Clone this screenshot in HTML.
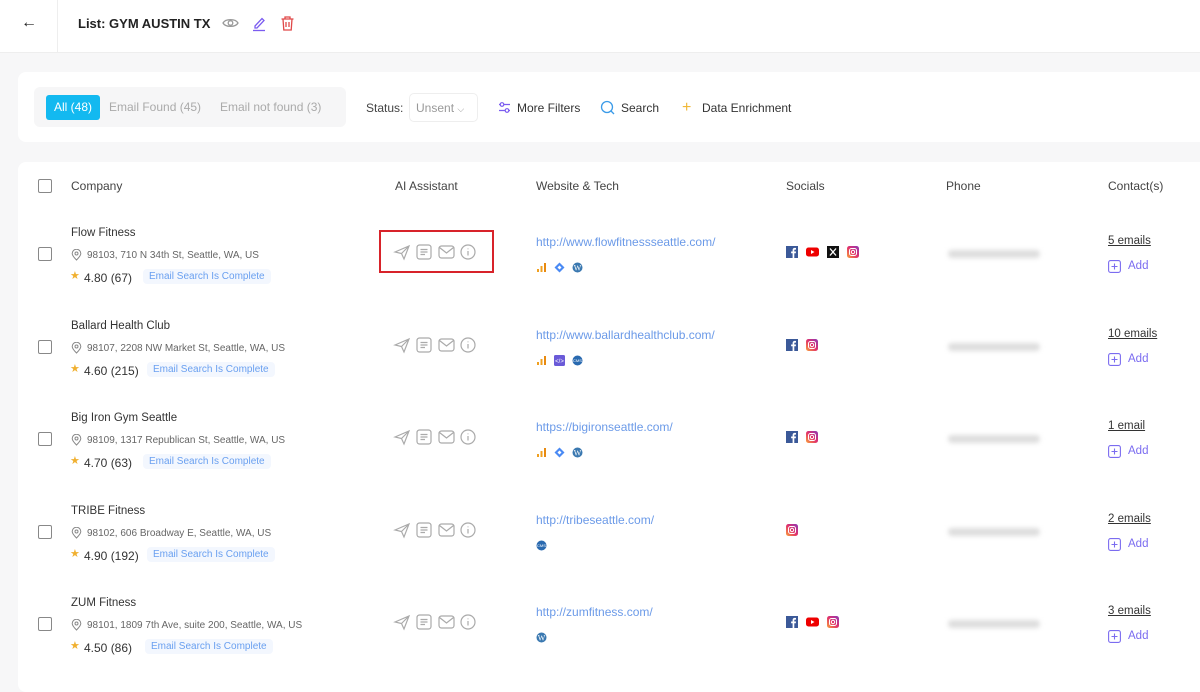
<!DOCTYPE html>
<html><head><meta charset="utf-8"><style>
*{margin:0;padding:0;box-sizing:border-box}
body{width:1200px;height:684px;overflow:hidden;background:#f7f7f8;font-family:"Liberation Sans",sans-serif;color:#333;position:relative;font-size:12px}
.a{position:absolute;white-space:nowrap}
.top{position:absolute;left:0;top:0;width:1200px;height:53px;background:#fff;border-bottom:1px solid #eee}
.card{position:absolute;background:#fff;border-radius:8px}
.cb{position:absolute;width:14px;height:14px;border:1.3px solid #888;border-radius:2px;background:#fff}
.hd{color:#444;font-size:12px}
.nm{font-size:11.5px;color:#333}
.ad{font-size:10px;color:#666}
.rt{font-size:12px;color:#333}
.bd{font-size:10px;color:#6aa0f0;background:#f3f7fe;padding:2px 6px;border-radius:4px}
.url{font-size:12px;color:#6b9ae8}
.em{font-size:11.5px;color:#333;text-decoration:underline}
.add{font-size:11.5px;color:#7b6cf0}
.blur{position:absolute;height:8px;background:#ddd;border-radius:4px;filter:blur(2.5px)}
</style></head><body>
<div class="top"></div>
<div class="a" style="left:0;top:0;width:58px;height:53px;border-right:1px solid #eee"></div>
<div class="a" style="left:21px;top:14px;font-size:16px;color:#222">←</div>
<div class="a" style="left:78px;top:16px;font-size:13px;font-weight:bold;color:#222">List: GYM AUSTIN TX</div>
<svg class="a" style="left:222px;top:16px" width="17" height="14" viewBox="0 0 17 14"><path d="M1 7C3.5 2.5 13.5 2.5 16 7C13.5 11.5 3.5 11.5 1 7Z" fill="none" stroke="#999" stroke-width="1.3"/><circle cx="8.5" cy="7" r="2.3" fill="none" stroke="#999" stroke-width="1.3"/></svg>
<svg class="a" style="left:251px;top:15px" width="16" height="17" viewBox="0 0 16 17"><path d="M4 11L11 3.5L13 5.5L6 13H4Z" fill="none" stroke="#7b5cf0" stroke-width="1.3"/><path d="M2 15.5H14" stroke="#7b5cf0" stroke-width="1.3"/></svg>
<svg class="a" style="left:280px;top:15px" width="15" height="17" viewBox="0 0 15 17"><path d="M1.5 4H13.5M5 4V2H10V4M3 4L3.8 15H11.2L12 4M6 7V12M9 7V12" fill="none" stroke="#e04848" stroke-width="1.3"/></svg>

<div class="card" style="left:18px;top:72px;width:1190px;height:70px"></div>
<div class="a" style="left:34px;top:87px;width:312px;height:40px;background:#f6f6f7;border-radius:6px"></div>
<div class="a" style="left:46px;top:95px;width:54px;height:25px;background:#13b9f0;border-radius:3px;color:#fff;font-size:12px;line-height:25px;text-align:center">All (48)</div>
<div class="a" style="left:109px;top:100px;font-size:12px;color:#aaa">Email Found (45)</div>
<div class="a" style="left:220px;top:100px;font-size:12px;color:#aaa">Email not found (3)</div>
<div class="a" style="left:366px;top:101px;font-size:12px;color:#444">Status:</div>
<div class="a" style="left:409px;top:93px;width:69px;height:29px;border:1px solid #eee;border-radius:5px;font-size:12px;color:#999;padding:7px 6px">Unsent <span style="font-size:9px">⌵</span></div>
<svg class="a" style="left:498px;top:101px" width="13" height="13" viewBox="0 0 13 13"><path d="M1 3.5H12M1 9.5H12" stroke="#7b5cf0" stroke-width="1.2"/><circle cx="4" cy="3.5" r="1.8" fill="#fff" stroke="#7b5cf0" stroke-width="1.2"/><circle cx="9" cy="9.5" r="1.8" fill="#fff" stroke="#7b5cf0" stroke-width="1.2"/></svg>
<div class="a" style="left:517px;top:101px;font-size:12px;color:#333">More Filters</div>
<svg class="a" style="left:600px;top:100px" width="15" height="15" viewBox="0 0 15 15"><circle cx="7" cy="7" r="5.5" fill="none" stroke="#3b9be8" stroke-width="1.3"/><path d="M11 11L14 14" stroke="#3b9be8" stroke-width="1.3"/></svg>
<div class="a" style="left:621px;top:101px;font-size:12px;color:#333">Search</div>
<div class="a" style="left:682px;top:99px;font-size:16px;color:#f0b838">+</div>
<div class="a" style="left:702px;top:101px;font-size:12px;color:#333">Data Enrichment</div>

<div class="card" style="left:18px;top:162px;width:1190px;height:530px"></div>
<div class="cb" style="left:38px;top:179px"></div>
<div class="a hd" style="left:71px;top:179px">Company</div>
<div class="a hd" style="left:395px;top:179px">AI Assistant</div>
<div class="a hd" style="left:536px;top:179px">Website &amp; Tech</div>
<div class="a hd" style="left:786px;top:179px">Socials</div>
<div class="a hd" style="left:946px;top:179px">Phone</div>
<div class="a hd" style="left:1108px;top:179px">Contact(s)</div>

<div class="a" style="left:379px;top:230px;width:115px;height:43px;border:2px solid #d8232a"></div>

<div id="rows"></div>
<script>
const R=[
["Flow Fitness","98103, 710 N 34th St, Seattle, WA, US","4.80 (67)","http://www.flowfitnessseattle.com/",["ga","gtm","wp"],["fb","yt","x","ig"],"5 emails",149],
["Ballard Health Club","98107, 2208 NW Market St, Seattle, WA, US","4.60 (215)","http://www.ballardhealthclub.com/",["ga","code","cms"],["fb","ig"],"10 emails",153],
["Big Iron Gym Seattle","98109, 1317 Republican St, Seattle, WA, US","4.70 (63)","https://bigironseattle.com/",["ga","gtm","wp"],["fb","ig"],"1 email",149],
["TRIBE Fitness","98102, 606 Broadway E, Seattle, WA, US","4.90 (192)","http://tribeseattle.com/",["cms"],["ig"],"2 emails",153],
["ZUM Fitness","98101, 1809 7th Ave, suite 200, Seattle, WA, US","4.50 (86)","http://zumfitness.com/",["wp"],["fb","yt","ig"],"3 emails",151]];
const T={ga:'<svg width="11" height="11"><rect x="1" y="7" width="2" height="3" fill="#f0a020"/><rect x="4.5" y="4" width="2" height="6" fill="#f0a020"/><rect x="8" y="1" width="2" height="9" fill="#e88a10"/></svg>',
gtm:'<svg width="11" height="11"><path d="M5.5 0.5L10.5 5.5L5.5 10.5L0.5 5.5Z" fill="#4a8af4"/><path d="M5.5 3.5L7.5 5.5L5.5 7.5L3.5 5.5Z" fill="#fff"/></svg>',
wp:'<svg width="11" height="11"><circle cx="5.5" cy="5.5" r="5" fill="#3a78b0"/><text x="5.5" y="8.3" font-size="8" fill="#fff" text-anchor="middle" font-family="Liberation Serif">W</text></svg>',
code:'<svg width="11" height="11"><rect width="11" height="11" rx="1.5" fill="#6a5ad8"/><text x="5.5" y="8" font-size="6" fill="#fff" text-anchor="middle">&lt;/&gt;</text></svg>',
cms:'<svg width="11" height="11"><circle cx="5.5" cy="5.5" r="5" fill="#2a6ab0"/><text x="5.5" y="7.2" font-size="4" fill="#fff" text-anchor="middle">CMS</text></svg>'};
const S={fb:'<svg width="12" height="12"><rect width="12" height="12" fill="#3b5998"/><path d="M8.3 12V7.3H9.8L10 5.5H8.3V4.4C8.3 3.9 8.5 3.6 9.1 3.6H10V2C9.6 2 9.2 1.9 8.7 1.9 7.4 1.9 6.6 2.7 6.6 4.1V5.5H5.1V7.3H6.6V12Z" fill="#fff"/></svg>',
yt:'<svg width="13" height="12"><rect y="1.5" width="13" height="9" rx="2.5" fill="#e00"/><path d="M5 4V8L8.5 6Z" fill="#fff"/></svg>',
x:'<svg width="12" height="12"><rect width="12" height="12" fill="#111"/><path d="M3 2.5L9 9.5M9 2.5L3 9.5" stroke="#fff" stroke-width="1.3"/></svg>',
ig:'<svg width="12" height="12"><defs><linearGradient id="g" x1="0" y1="1" x2="1" y2="0"><stop offset="0" stop-color="#f9a23a"/><stop offset=".5" stop-color="#e1306c"/><stop offset="1" stop-color="#8a3ab9"/></linearGradient></defs><rect width="12" height="12" rx="2.5" fill="url(#g)"/><rect x="2.5" y="2.5" width="7" height="7" rx="2" fill="none" stroke="#fff" stroke-width="1"/><circle cx="6" cy="6" r="1.7" fill="none" stroke="#fff" stroke-width="1"/></svg>'};
const ai='<svg width="96" height="18" viewBox="0 0 96 18" fill="none" stroke="#aaa" stroke-width="1.2"><path d="M2 9L16 3L11 16L8.5 10.5Z M8.5 10.5L16 3"/><rect x="24" y="2" width="14" height="14" rx="2.5"/><path d="M27.5 6.5H34.5M27.5 9H34.5M27.5 11.5H32"/><rect x="46" y="3" width="15" height="12" rx="2.5"/><path d="M46.5 4.5L53.5 10L60.5 4.5"/><circle cx="75" cy="9" r="7"/><path d="M75 8V12.5M75 5.5V6.3"/></svg>';
let h='';
R.forEach((r,i)=>{const y=Math.round(224+92.5*i);
h+=`<div class="cb" style="left:38px;top:${y+23}px"></div>
<div class="a nm" style="left:71px;top:${y+3}px">${r[0]}</div>
<svg class="a" style="left:71px;top:${y+25}px" width="11" height="12" viewBox="0 0 11 12"><path d="M5.5 11C2 7.5 1.2 6 1.2 4.5A4.3 4.3 0 0 1 9.8 4.5C9.8 6 9 7.5 5.5 11Z" fill="none" stroke="#888" stroke-width="1"/><circle cx="5.5" cy="4.5" r="1.5" fill="none" stroke="#888"/></svg>
<div class="a ad" style="left:87px;top:${y+26}px">${r[1]}</div>
<div class="a" style="left:70px;top:${y+45}px;color:#f0b030;font-size:11px">★</div>
<div class="a rt" style="left:84px;top:${y+47}px">${r[2]}</div>
<div class="a bd" style="left:${r[7]-6}px;top:${y+45}px">Email Search Is Complete</div>
<div class="a" style="left:393px;top:${y+19}px">${ai}</div>
<div class="a url" style="left:536px;top:${y+11}px">${r[3]}</div>
<div class="a" style="left:536px;top:${y+38}px;display:flex;gap:7px">${r[4].map(t=>T[t]).join('')}</div>
<div class="a" style="left:786px;top:${y+22}px;display:flex;gap:8px">${r[5].map(t=>S[t]).join('')}</div>
<div class="blur" style="left:948px;top:${y+26}px;width:92px"></div>
<div class="a em" style="left:1108px;top:${y+11}px">${r[6]}</div>
<svg class="a" style="left:1108px;top:${y+36}px" width="13" height="13" viewBox="0 0 13 13"><rect x="0.6" y="0.6" width="11.8" height="11.8" rx="2" fill="none" stroke="#7b6cf0" stroke-width="1.1"/><path d="M6.5 3.5V9.5M3.5 6.5H9.5" stroke="#7b6cf0" stroke-width="1.1"/></svg>
<div class="a add" style="left:1128px;top:${y+36}px">Add</div>`;});
document.getElementById('rows').innerHTML=h;
</script>
</body></html>
